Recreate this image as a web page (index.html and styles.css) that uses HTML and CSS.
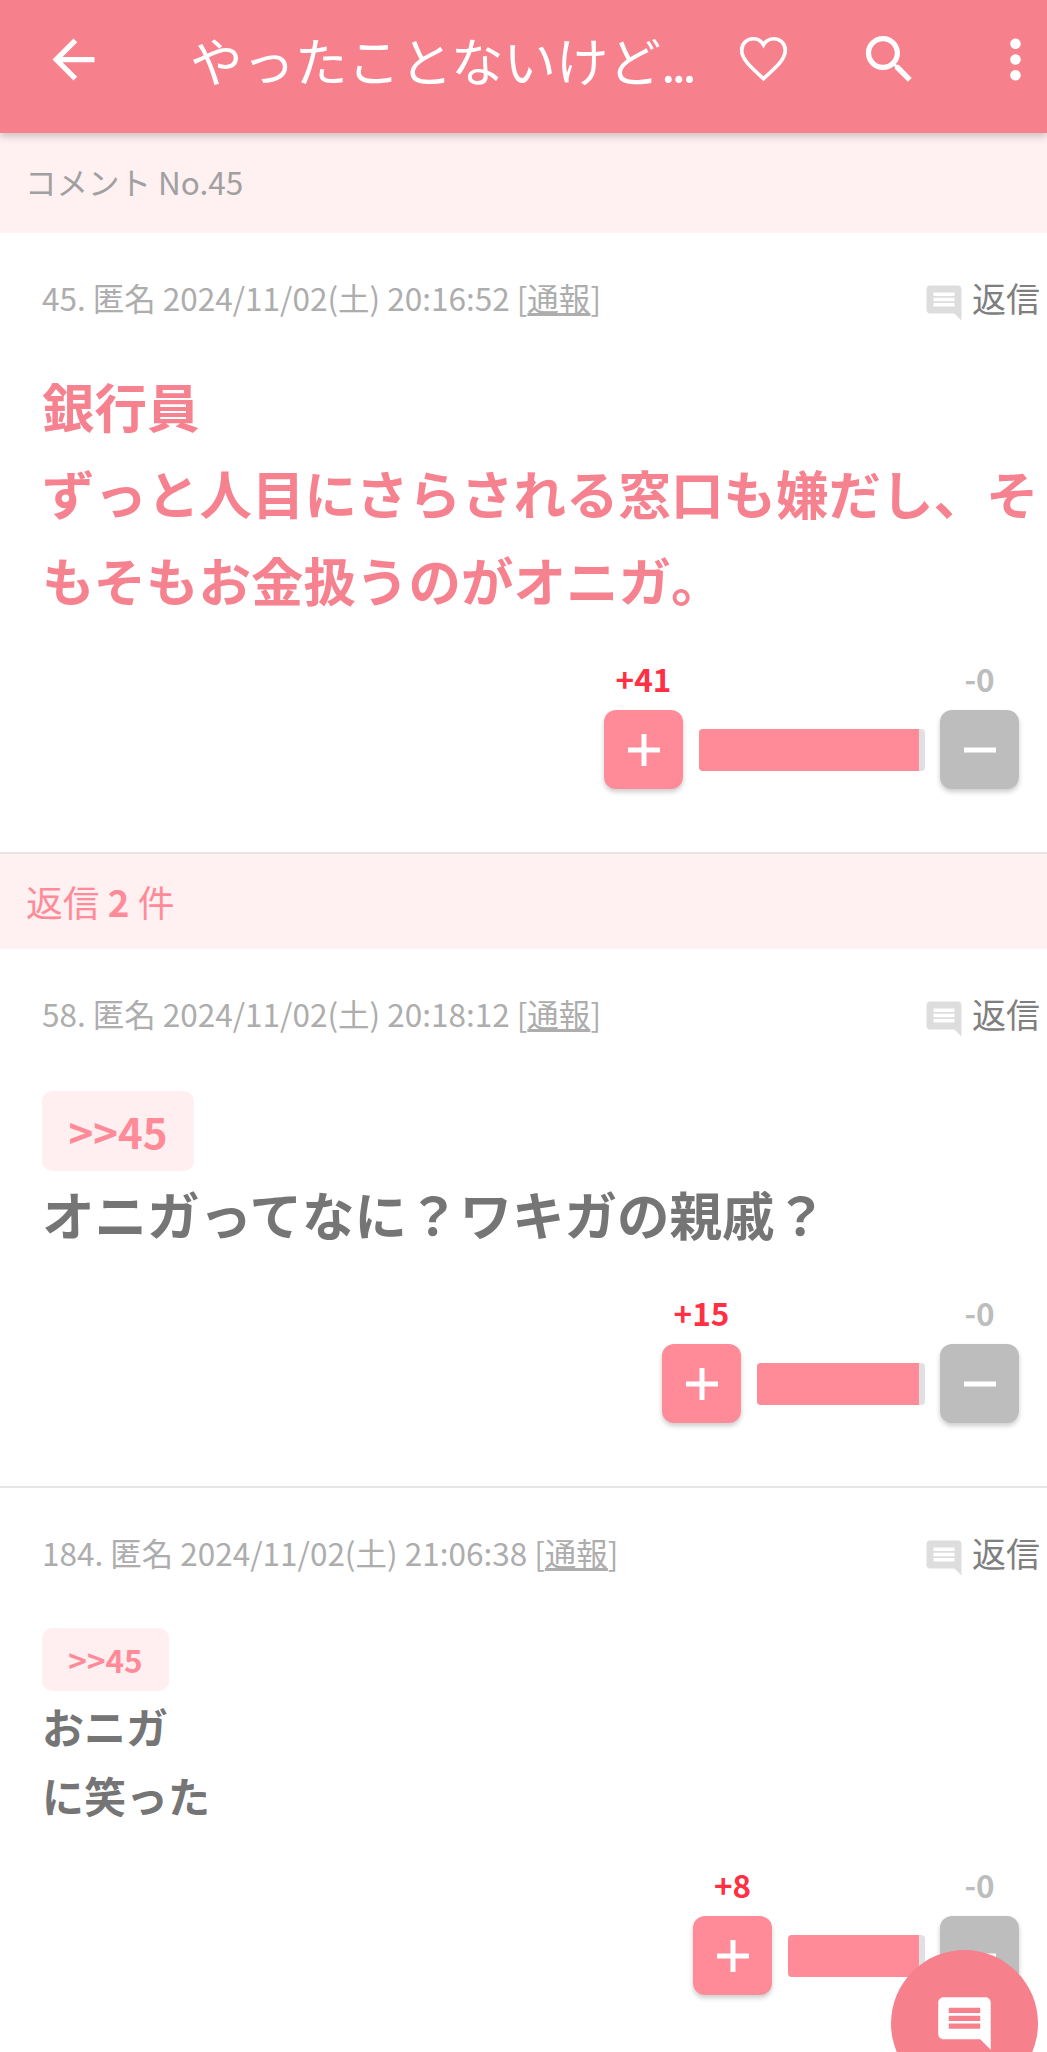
FILE: index.html
```html
<!DOCTYPE html>
<html lang="ja">
<head>
    <meta charset="UTF-8">
    <meta name="viewport" content="width=device-width, initial-scale=1.0">
    <title>コメント No.45</title>
    <link rel="stylesheet" href="styles.css">
</head>
<body>
    <div class="page">
        <div class="header">
            <svg class="header-icon back" viewBox="0 0 24 24"><path d="M20 11H7.83l5.59-5.59L12 4l-8 8 8 8 1.41-1.41L7.83 13H20v-2z"/></svg>
            <div class="header-title">やったことないけど<span class="title-dots">...</span></div>
            <svg class="header-icon fav" viewBox="0 0 24 24"><path d="M12 19.3C6.8 14.6 3.7 11.8 3.7 8.5 3.7 6 5.6 4.1 8 4.1c1.6 0 3.2.9 4 2.3.8-1.4 2.4-2.3 4-2.3 2.4 0 4.3 1.9 4.3 4.4 0 3.3-3.1 6.1-8.3 10.8z"/></svg>
            <svg class="header-icon search" viewBox="0 0 24 24"><path d="M15.5 14h-.79l-.28-.27C15.41 12.59 16 11.11 16 9.5 16 5.91 13.09 3 9.5 3S3 5.91 3 9.5 5.91 16 9.5 16c1.61 0 3.09-.59 4.23-1.57l.27.28v.79l5 4.99L20.49 19l-4.99-5zm-6 0C7.01 14 5 11.99 5 9.5S7.01 5 9.5 5 14 7.01 14 9.5 11.99 14 9.5 14z"/></svg>
            <svg class="header-icon more" viewBox="0 0 24 24"><path d="M12 8c1.1 0 2-.9 2-2s-.9-2-2-2-2 .9-2 2 .9 2 2 2zm0 2c-1.1 0-2 .9-2 2s.9 2 2 2 2-.9 2-2-.9-2-2-2zm0 6c-1.1 0-2 .9-2 2s.9 2 2 2 2-.9 2-2-.9-2-2-2z"/></svg>
        </div>

        <div class="section-bar">コメント No.45</div>

        <div class="comment">
            <div class="meta">
                <span class="meta-text">45. 匿名 2024/11/02(土) 20:16:52 [<u>通報</u>]</span>
                <span class="reply-link">
                    <svg class="reply-icon" viewBox="0 0 24 24"><path d="M21.99 4c0-1.1-.89-2-1.99-2H4c-1.1 0-2 .9-2 2v12c0 1.1.9 2 2 2h14l4 4-.01-18zM18 14H6v-2h12v2zm0-3H6V9h12v2zm0-3H6V6h12v2z"/></svg>
                    返信
                </span>
            </div>
            <div class="body body-large body-pink">銀行員<br>ずっと人目にさらされる窓口も嫌だし、そもそもお金扱うのがオニガ。</div>
            <div class="vote">
                <div class="vote-col">
                    <span class="count count-plus">+41</span>
                    <div class="vote-btn btn-plus"><svg class="vote-sign" viewBox="0 0 32 32"><path d="M13.5 0h5v13.5H32v5H18.5V32h-5V18.5H0v-5h13.5z"/></svg></div>
                </div>
                <div class="vote-bar" style="width: 226px"><div class="vote-fill"></div></div>
                <div class="vote-col">
                    <span class="count count-minus">-0</span>
                    <div class="vote-btn btn-minus"><svg class="vote-sign" viewBox="0 0 32 32"><path d="M0 13.5h32v5H0z"/></svg></div>
                </div>
            </div>
        </div>

        <div class="section-bar section-reply">返信 <b>2</b> 件</div>

        <div class="comment">
            <div class="meta">
                <span class="meta-text">58. 匿名 2024/11/02(土) 20:18:12 [<u>通報</u>]</span>
                <span class="reply-link">
                    <svg class="reply-icon" viewBox="0 0 24 24"><path d="M21.99 4c0-1.1-.89-2-1.99-2H4c-1.1 0-2 .9-2 2v12c0 1.1.9 2 2 2h14l4 4-.01-18zM18 14H6v-2h12v2zm0-3H6V9h12v2zm0-3H6V6h12v2z"/></svg>
                    返信
                </span>
            </div>
            <div class="anchor anchor-large">&gt;&gt;45</div>
            <div class="body body-large body-after-anchor">オニガってなに？ワキガの親戚？</div>
            <div class="vote">
                <div class="vote-col">
                    <span class="count count-plus">+15</span>
                    <div class="vote-btn btn-plus"><svg class="vote-sign" viewBox="0 0 32 32"><path d="M13.5 0h5v13.5H32v5H18.5V32h-5V18.5H0v-5h13.5z"/></svg></div>
                </div>
                <div class="vote-bar" style="width: 168px"><div class="vote-fill"></div></div>
                <div class="vote-col">
                    <span class="count count-minus">-0</span>
                    <div class="vote-btn btn-minus"><svg class="vote-sign" viewBox="0 0 32 32"><path d="M0 13.5h32v5H0z"/></svg></div>
                </div>
            </div>
        </div>

        <div class="comment">
            <div class="meta">
                <span class="meta-text">184. 匿名 2024/11/02(土) 21:06:38 [<u>通報</u>]</span>
                <span class="reply-link">
                    <svg class="reply-icon" viewBox="0 0 24 24"><path d="M21.99 4c0-1.1-.89-2-1.99-2H4c-1.1 0-2 .9-2 2v12c0 1.1.9 2 2 2h14l4 4-.01-18zM18 14H6v-2h12v2zm0-3H6V9h12v2zm0-3H6V6h12v2z"/></svg>
                    返信
                </span>
            </div>
            <div class="anchor">&gt;&gt;45</div>
            <div class="body">おニガ<br>に笑った</div>
            <div class="vote">
                <div class="vote-col">
                    <span class="count count-plus">+8</span>
                    <div class="vote-btn btn-plus"><svg class="vote-sign" viewBox="0 0 32 32"><path d="M13.5 0h5v13.5H32v5H18.5V32h-5V18.5H0v-5h13.5z"/></svg></div>
                </div>
                <div class="vote-bar" style="width: 137px"><div class="vote-fill"></div></div>
                <div class="vote-col">
                    <span class="count count-minus">-0</span>
                    <div class="vote-btn btn-minus"><svg class="vote-sign" viewBox="0 0 32 32"><path d="M0 13.5h32v5H0z"/></svg></div>
                </div>
            </div>
        </div>

        <div class="fab">
            <svg class="fab-icon" viewBox="0 0 24 24"><path d="M21.99 4c0-1.1-.89-2-1.99-2H4c-1.1 0-2 .9-2 2v12c0 1.1.9 2 2 2h14l4 4-.01-18zM18 14H6v-2h12v2zm0-3H6V9h12v2zm0-3H6V6h12v2z"/></svg>
        </div>
    </div>
</body>
</html>
```

FILE: styles.css
```css
* {
    font-family: "Noto Sans CJK JP", "Noto Sans", sans-serif;
    box-sizing: border-box;
    padding: 0;
    margin: 0;
}
body {
    background-color: #FFFFFF;
}
.page {
    position: relative;
    width: 1047px;
    height: 2052px;
    overflow: hidden;
}
.header {
    position: relative;
    display: flex;
    align-items: center;
    height: 133px;
    padding-bottom: 14px;
    background-color: #F7808D;
    box-shadow: 0 3px 8px rgba(0, 0, 0, 0.22);
}
.header-icon {
    flex: none;
    width: 63px;
    height: 63px;
    fill: #FFFFFF;
}
.back {
    margin-left: 42px;
}
.header-title {
    width: 542px;
    margin-left: 85px;
    font-size: 52.5px;
    line-height: 63px;
    color: #FFFFFF;
    white-space: nowrap;
}
.title-dots {
    letter-spacing: -4px;
}
.header-icon.fav {
    fill: none;
    stroke: #FFFFFF;
    stroke-width: 1.4;
}
.search {
    margin-left: 63px;
}
.more {
    margin-left: 63px;
}
.section-bar {
    display: flex;
    align-items: center;
    height: 100px;
    padding-left: 25px;
    padding-bottom: 5px;
    background-color: #FFF0F1;
    font-size: 31.5px;
    color: #A0A0A0;
}
.section-reply {
    display: block;
    height: 95px;
    padding-left: 26px;
    padding-bottom: 0;
    line-height: 95px;
    font-size: 36.75px;
    color: #FF8B99;
}
.comment {
    padding: 39px 28px 63px 42px;
    border-bottom: 2px solid #E6E6E6;
}
.meta {
    display: flex;
    align-items: center;
    justify-content: space-between;
    height: 50px;
    margin-right: -21px;
    font-size: 31.5px;
    color: #ADADAD;
}
.reply-link {
    display: flex;
    align-items: center;
    gap: 7px;
    font-size: 34px;
    color: #7F7F7F;
}
.reply-icon {
    width: 42px;
    height: 42px;
    margin-top: 12px;
    fill: #DDDDDD;
}
.body {
    margin-right: -28px;
    font-size: 42px;
    line-height: 69px;
    font-weight: 700;
    color: #757575;
}
.body-large {
    margin-top: 40px;
    font-size: 52.5px;
    line-height: 87px;
}
.body-pink {
    color: #F7828F;
}
.body-after-anchor {
    margin-top: -1px;
}
.anchor {
    width: 127px;
    height: 63px;
    margin-top: 51px;
    border-radius: 10px;
    background-color: #FFEFF0;
    font-size: 31.5px;
    line-height: 63px;
    font-weight: 700;
    text-align: center;
    color: #FF8B99;
}
.anchor-large {
    width: 152px;
    height: 80px;
    margin-top: 53px;
    font-size: 42px;
    line-height: 80px;
}
.vote {
    display: flex;
    justify-content: flex-end;
    align-items: flex-end;
    margin-top: 33px;
}
.vote-col {
    display: flex;
    flex-direction: column;
    align-items: center;
    gap: 10px;
}
.count {
    font-size: 31.5px;
    line-height: 44px;
    font-weight: 700;
}
.count-plus {
    color: #FF3044;
}
.count-minus {
    color: #BDBDBD;
}
.vote-btn {
    display: flex;
    align-items: center;
    justify-content: center;
    width: 79px;
    height: 79px;
    border-radius: 12px;
    box-shadow: 0 3px 5px rgba(0, 0, 0, 0.2);
}
.vote-sign {
    width: 32px;
    height: 32px;
    fill: #FFFFFF;
}
.btn-plus {
    background-color: #FF8B99;
}
.btn-minus {
    background-color: #BDBDBD;
}
.vote-bar {
    height: 42px;
    margin: 0 15px 18px 16px;
    padding-right: 6px;
    border-radius: 4px;
    background-color: #E0E0E0;
    overflow: hidden;
}
.vote-fill {
    height: 100%;
    background-color: #FF8B99;
}
.fab {
    position: absolute;
    left: 891px;
    top: 1950px;
    display: flex;
    align-items: center;
    justify-content: center;
    width: 147px;
    height: 147px;
    border-radius: 50%;
    background-color: #F7808D;
}
.fab-icon {
    width: 63px;
    height: 63px;
    fill: #FFFFFF;
}
```
